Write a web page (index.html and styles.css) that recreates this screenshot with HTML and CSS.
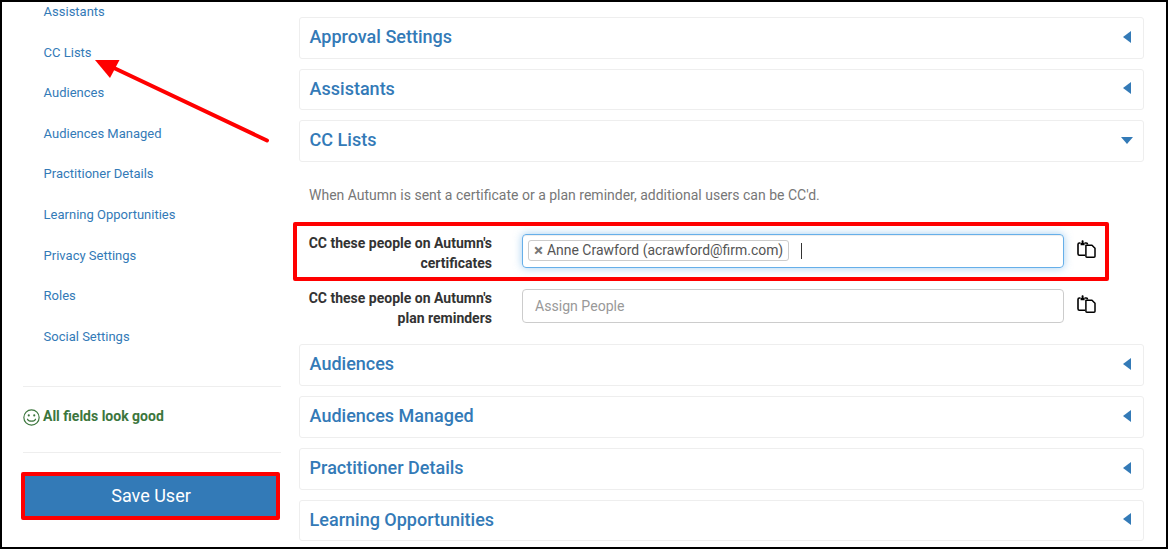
FILE: index.html
```html
<!DOCTYPE html>
<html lang="en">
<head>
<meta charset="utf-8">
<title>Edit User</title>
<link rel="stylesheet" href="styles.css">
</head>
<body>
<div class="frame">
  <aside class="sidebar">
    <nav class="nav">
      <a href="#">Assistants</a>
      <a href="#">CC Lists</a>
      <a href="#">Audiences</a>
      <a href="#">Audiences Managed</a>
      <a href="#">Practitioner Details</a>
      <a href="#">Learning Opportunities</a>
      <a href="#">Privacy Settings</a>
      <a href="#">Roles</a>
      <a href="#">Social Settings</a>
    </nav>
    <div class="status">
      <svg class="smile" viewBox="0 0 16 16" width="17" height="17" aria-hidden="true"><circle cx="8" cy="8" r="7.2" fill="none" stroke="#3c763d" stroke-width="1.1"/><circle cx="5.4" cy="6" r="1" fill="#3c763d"/><circle cx="10.6" cy="6" r="1" fill="#3c763d"/><path d="M4.2 9.6c1 2.4 6.6 2.4 7.6 0" fill="none" stroke="#3c763d" stroke-width="1.1" stroke-linecap="round"/></svg>
      <span>All fields look good</span>
    </div>
    <button class="save" type="button">Save User</button>
  </aside>
  <main class="main">
    <section class="panel"><h3>Approval Settings</h3><i class="caret-left"></i></section>
    <section class="panel panel-short"><h3>Assistants</h3><i class="caret-left"></i></section>
    <section class="panel panel-open"><h3>CC Lists</h3><i class="caret-down"></i></section>
    <div class="cc-body">
      <p class="help">When Autumn is sent a certificate or a plan reminder, additional users can be CC'd.</p>
      <div class="field field-marked">
        <label>CC these people on Autumn's certificates</label>
        <div class="input input-focus">
          <span class="tag"><b>×</b>Anne Crawford (acrawford@firm.com)</span>
          <span class="cursor"></span>
        </div>
        <svg class="paste" viewBox="0 0 19 18" width="19" height="18" aria-hidden="true"><use href="#paste-icon"/></svg>
      </div>
      <div class="field">
        <label>CC these people on Autumn's plan reminders</label>
        <div class="input"><span class="placeholder">Assign People</span></div>
        <svg class="paste" viewBox="0 0 19 18" width="19" height="18" aria-hidden="true"><use href="#paste-icon"/></svg>
      </div>
    </div>
    <section class="panel"><h3>Audiences</h3><i class="caret-left"></i></section>
    <section class="panel"><h3>Audiences Managed</h3><i class="caret-left"></i></section>
    <section class="panel"><h3>Practitioner Details</h3><i class="caret-left"></i></section>
    <section class="panel panel-short"><h3>Learning Opportunities</h3><i class="caret-left"></i></section>
  </main>
  <svg class="arrow" viewBox="0 0 1168 549" width="1168" height="549" aria-hidden="true">
    <path d="M267 140.500L114 68" stroke="#f00" stroke-width="4" stroke-linecap="round" fill="none"/>
    <path d="M95 60H119.500L110 78Z" fill="#f00"/>
  </svg>
  <svg class="defs" width="0" height="0" aria-hidden="true">
    <defs>
      <g id="paste-icon" fill="none" stroke="#000" stroke-linejoin="round">
        <path d="M8 15.200H2.400c-.8 0-1.400-.6-1.400-1.400V4.400c0-.8.6-1.400 1.400-1.400H3.500M7.500 3H9.200c.8 0 1.400.6 1.400 1.400" stroke-width="1.600"/>
        <path d="M3.600 5.200V3H4.600V1.200C4.600-.2 6.600-.2 6.600 1.200V3H7.600V5.200Z" fill="#000" stroke="none"/>
        <path d="M8.900 5.200H15L18 8.200V16.200c0 .6-.4 1-1 1H9.900c-.6 0-1-.4-1-1Z" stroke-width="1.500"/>
      </g>
    </defs>
  </svg>
</div>
</body>
</html>
```

FILE: styles.css
```css
* { box-sizing: border-box; }
html, body { margin: 0; padding: 0; }
body { font-family: Roboto, "Liberation Sans", sans-serif; color: #333; background: #fff; }
.frame {
  position: relative;
  width: 1168px;
  height: 549px;
  border: 2px solid #000;
  overflow: hidden;
  display: flex;
  background: #fff;
}
.sidebar { width: 297px; flex: none; padding-left: 21px; display: flex; flex-direction: column; }
.nav {
  display: flex;
  flex-direction: column;
  gap: 21.6px;
  margin: 0 18px 0 0;
  padding: 0 0 40px 20.6px;
  border-bottom: 1px solid #eee;
  height: 385px;
}
.nav a { font-size: 13px; line-height: 19px; color: #337ab7; text-decoration: none; }
.status {
  display: flex;
  align-items: center;
  gap: 3px;
  margin-right: 18px;
  padding-bottom: 6px;
  height: 66px;
  border-bottom: 1px solid #eee;
  font-size: 14px;
  font-weight: 700;
  color: #3c763d;
}
.smile { flex: none; margin-top: 1px; }
.status span { margin-top: -2px; }
.save {
  width: 259px;
  height: 48px;
  margin: 19px 0 0 -2px;
  padding: 0 0 2px 1px;
  border: 4px solid #f00;
  border-radius: 2px;
  background: #337ab7;
  color: #fff;
  font: 400 18px Roboto, sans-serif;
}
.main { width: 845px; flex: none; padding-top: 15px; display: flex; flex-direction: column; }
.panel {
  display: flex;
  align-items: center;
  justify-content: space-between;
  height: 42px;
  flex: none;
  margin-bottom: 10px;
  padding: 0 12px 0 9.6px;
  border: 1px solid #eee;
  border-radius: 3px;
}
.panel-short { height: 41px; }
.panel h3 { margin: 0 0 2px; font-size: 18px; line-height: 20px; font-weight: 500; color: #337ab7; }
.caret-left { width: 0; height: 0; margin-bottom: 3px; border-style: solid; border-width: 6.5px 8px 6.5px 0; border-color: transparent #337ab7 transparent transparent; }
.caret-down { width: 0; height: 0; margin: 0 -2px 2px 0; border-style: solid; border-width: 7px 6.5px 0; border-color: #337ab7 transparent transparent; }
.panel-open { margin-bottom: 0; }
.cc-body { height: 182px; flex: none; }
.help { margin: 0; padding: 23px 0 0 10px; font-size: 14px; line-height: 20px; color: #777; }
.field { display: flex; align-items: center; position: relative; }
.field-marked { margin: 17px 0 0 -6px; width: 816px; height: 59px; border: 4px solid #f00; border-radius: 2px; padding: 0 0 1px 2px; }
.field:not(.field-marked) { height: 50px; }
.field label { width: 193px; margin: 4px 30px 0 0; text-align: right; font-size: 14px; line-height: 20px; font-weight: 700; color: #333; }
.input {
  width: 542px;
  height: 34px;
  flex: none;
  display: flex;
  align-items: center;
  padding: 0 5px;
  border: 1px solid #ccc;
  border-radius: 4px;
  font-size: 14px;
}
.input-focus { border-color: #66afe9; box-shadow: 0 0 8px rgba(102,175,233,.6), inset 0 1px 1px rgba(0,0,0,.075); }
.tag { display: flex; align-items: center; height: 21px; margin-bottom: 1px; padding: 0 5px 1px; border: 1px solid #ccc; border-radius: 3px; color: #555; font-size: 13.95px; white-space: nowrap; }
.tag b { margin-right: 4px; color: #777; font-size: 17px; line-height: 14px; }
.cursor { width: 1px; height: 16px; margin-left: 12px; background: #333; }
.placeholder { margin-left: 7px; color: #999; font-size: 14.1px; }
.paste { flex: none; margin: 0 0 4px 13px; }
.arrow { position: absolute; left: -2px; top: -2px; pointer-events: none; }
.defs { position: absolute; }
```
